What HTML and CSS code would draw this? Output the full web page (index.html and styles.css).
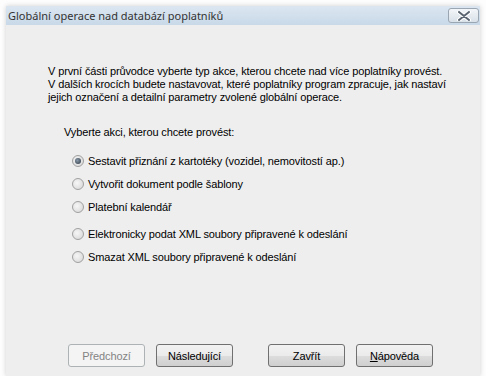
FILE: index.html
```html
<!DOCTYPE html>
<html>
<head>
<meta charset="utf-8">
<link rel="stylesheet" href="styles.css">
</head>
<body>
<div class="window">
  <div class="titlebar">
    <span class="title">Globální operace nad databází poplatníků</span>
    <span class="close"><svg width="16" height="10" viewBox="0 0 16 10"><path d="M3 1 L13 9 M13 1 L3 9" stroke="#fff" stroke-width="4" stroke-linecap="round"/><path d="M3 1 L13 9 M13 1 L3 9" stroke="#5a6470" stroke-width="2" stroke-linecap="round"/></svg></span>
  </div>
  <div class="content">
    <p class="intro">V první části průvodce vyberte typ akce, kterou chcete nad více poplatníky provést.<br>V dalších krocích budete nastavovat, které poplatníky program zpracuje, jak nastaví<br>jejich označení a detailní parametry zvolené globální operace.</p>
    <p class="prompt">Vyberte akci, kterou chcete provést:</p>
    <div class="options">
      <div class="opt"><span class="radio checked"></span>Sestavit přiznání z kartotéky (vozidel, nemovitostí ap.)</div>
      <div class="opt"><span class="radio"></span>Vytvořit dokument podle šablony</div>
      <div class="opt"><span class="radio"></span>Platební kalendář</div>
      <div class="opt gap"><span class="radio"></span>Elektronicky podat XML soubory připravené k odeslání</div>
      <div class="opt"><span class="radio"></span>Smazat XML soubory připravené k odeslání</div>
    </div>
    <div class="buttons">
      <span class="btn disabled">Předchozí</span>
      <span class="btn">Následující</span>
      <span class="btn sep">Zavřít</span>
      <span class="btn"><u>N</u>ápověda</span>
    </div>
  </div>
</div>
</body>
</html>
```
FILE: styles.css
```css
html, body { margin: 0; padding: 0; background: #fdfdfd; }
body { width: 486px; height: 376px; overflow: hidden; font-family: "Liberation Sans", Arial, sans-serif; font-size: 11px; letter-spacing: -0.12px; color: #000; }
.window { margin: 6px 6px 0 6px; height: 370px; background: #eeeeee; box-shadow: 0 0 5px rgba(0,0,0,0.18); display: flex; flex-direction: column; }
.titlebar { height: 19px; background: linear-gradient(#dbe6f1, #c9d9e8); display: flex; align-items: center; justify-content: space-between; padding: 0 0 0 2px; }
.title { font-family: "Noto Sans", "Open Sans", sans-serif; font-size: 11px; letter-spacing: 0; color: #333; }
.close { width: 29px; height: 13px; margin-right: 1px; border: 1px solid #9aa6b2; border-radius: 3px; background: linear-gradient(#f3f6f9, #d8e0e8); display: flex; align-items: center; justify-content: center; }
.content { flex: 1; display: flex; flex-direction: column; padding: 0 0 0 42px; }
.intro { margin: 40px 0 0 0; line-height: 13px; }
.prompt { margin: 22px 0 0 16px; line-height: 13px; }
.options { margin: 10px 0 0 24px; }
.opt { display: flex; align-items: center; height: 23px; }
.opt.gap { margin-top: 4px; }
.radio { width: 12px; height: 12px; border-radius: 50%; border: 1px solid #a0a0a0; background: radial-gradient(circle at 40% 40%, #f6f6f6, #d4d4d4); margin-right: 4px; box-sizing: border-box; position: relative; }
.radio.checked::after { content: ""; position: absolute; left: 2px; top: 2px; width: 6px; height: 6px; border-radius: 50%; background: radial-gradient(circle at 40% 40%, #8a9aaa, #2a3440); }
.buttons { margin-top: auto; margin-bottom: 9px; display: flex; gap: 11px; padding-left: 20px; }
.btn { width: 75px; height: 21px; border: 1px solid #707070; border-radius: 3px; background: linear-gradient(#f2f2f2 0%, #ebebeb 50%, #dddddd 51%, #cfcfcf 100%); display: flex; align-items: center; justify-content: center; }
.btn.disabled { border-color: #adb2b5; background: #f4f4f4; color: #838383; }
.btn.sep { margin-left: 24px; }
```
